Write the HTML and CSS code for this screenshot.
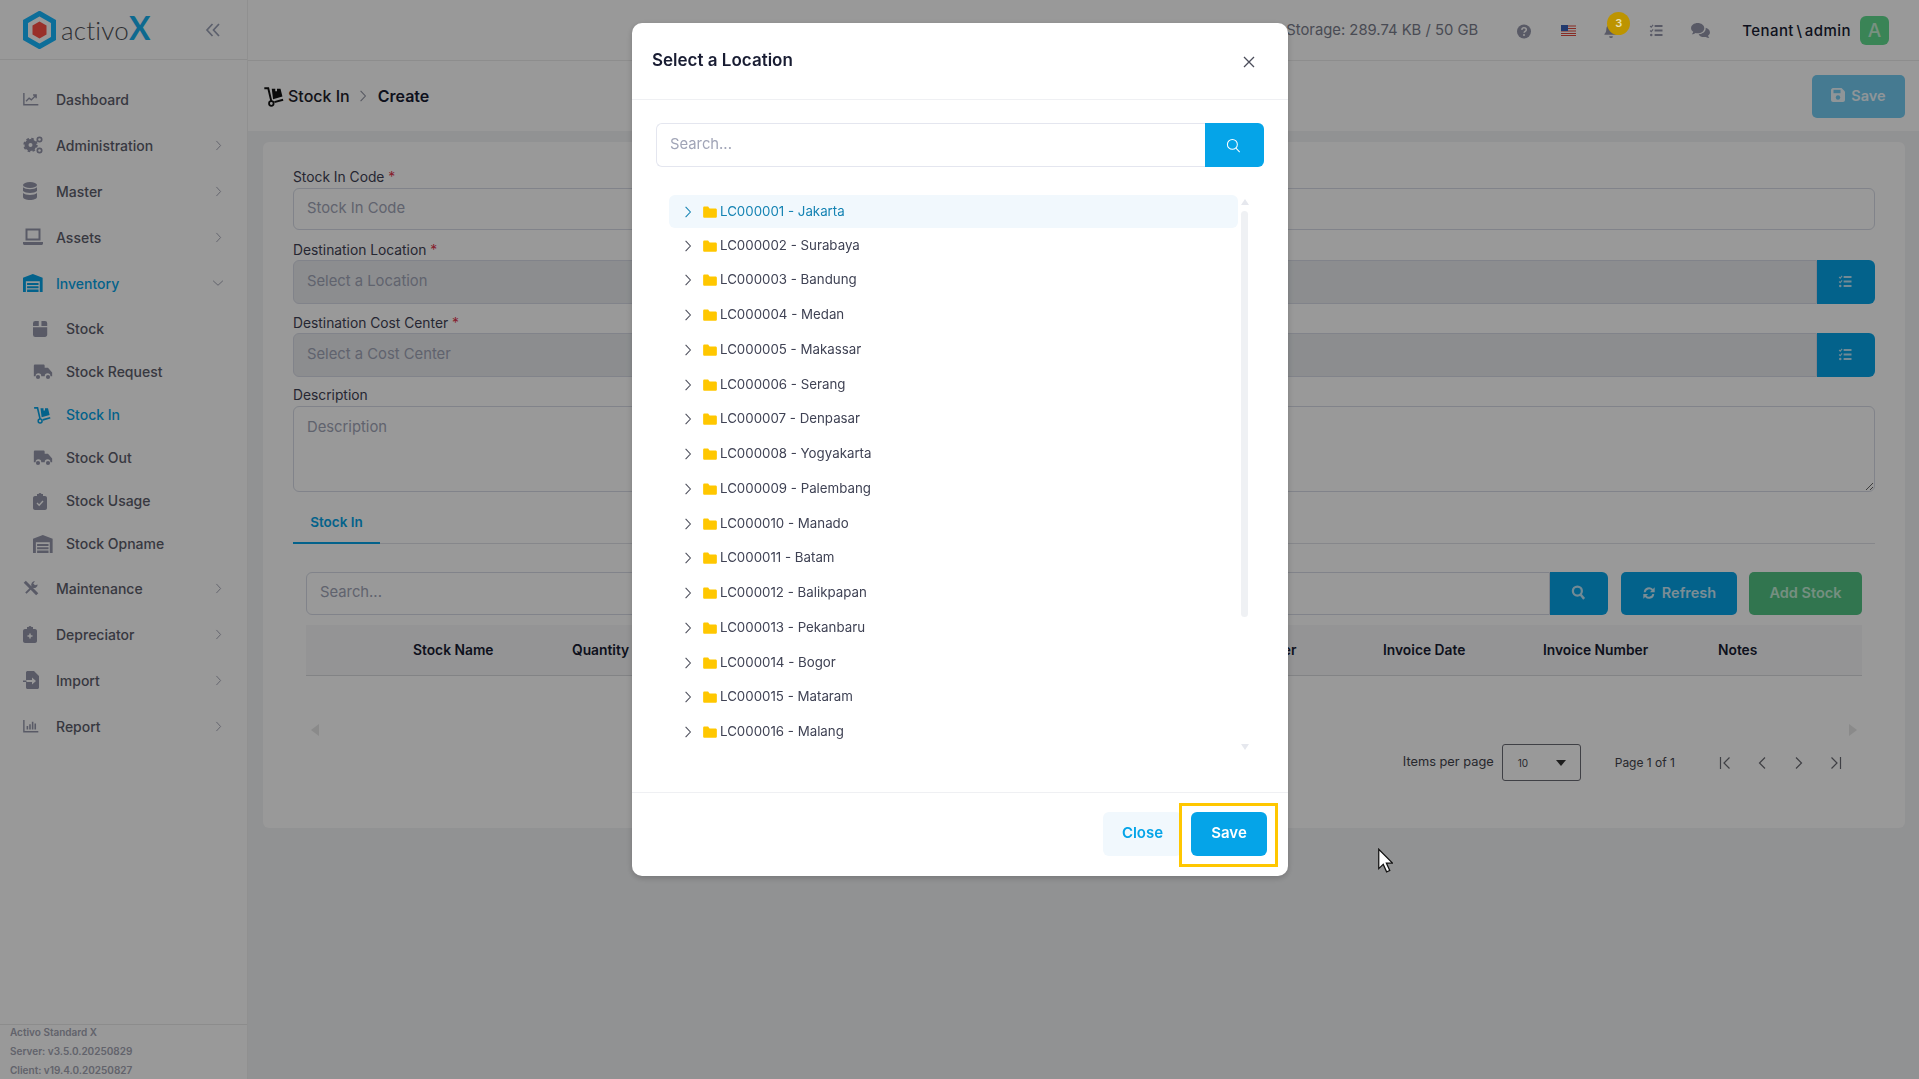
FILE: index.html
```html
<!DOCTYPE html>
<html lang="en">
<head>
<meta charset="utf-8">
<title>activoX - Stock In</title>
<link rel="stylesheet" href="styles.css">
</head>
<body>
<svg class="defs" width="0" height="0" aria-hidden="true">
  <defs>
    <symbol id="i-chev-r" viewBox="0 0 10 16"><path d="M2 1.500 8 8l-6 6.500" fill="none" stroke="currentColor" stroke-width="1.300"/></symbol>
    <symbol id="i-chev-d" viewBox="0 0 16 10"><path d="M1.500 2 8 8l6.500-6" fill="none" stroke="currentColor" stroke-width="1.300"/></symbol>
    <symbol id="i-cart" viewBox="0 0 24 24" preserveAspectRatio="xMinYMid meet"><path d="M1.500 2.500H6l3.500 15" fill="none" stroke="currentColor" stroke-width="2.200"/><circle cx="9.500" cy="20" r="2.600" fill="none" stroke="currentColor" stroke-width="2"/><path d="M13 18.500l10-2.800" stroke="currentColor" stroke-width="2.200"/><path d="M10 3h4v3h2V3h4l2.200 9L11.500 15z" fill="currentColor"/></symbol>
    <symbol id="i-list" viewBox="0 0 20 20"><path d="M7.500 4H18M7.500 10H18M7.500 16H18" stroke="currentColor" stroke-width="2.400"/><path d="M1.500 4l1.500 1.500L5.500 2.500M1.500 10l1.500 1.500 2.500-3" fill="none" stroke="currentColor" stroke-width="1.500"/><circle cx="3" cy="16" r="1.700" fill="currentColor"/></symbol>
    <symbol id="i-folder" viewBox="0 0 16 14"><path d="M0 2.200C0 1.300.7.700 1.500.700h4.300L7.500 3H14.500c.8 0 1.500.7 1.500 1.500v7.800c0 .8-.7 1.500-1.500 1.500h-13C.7 13.800 0 13.100 0 12.300z" fill="currentColor"/></symbol>
    <symbol id="i-search" viewBox="0 0 16 16"><circle cx="6.800" cy="6.800" r="5.300" fill="none" stroke="currentColor" stroke-width="1.100"/><path d="M10.600 10.800 14.600 15" stroke="currentColor" stroke-width="1.100"/></symbol>
    <symbol id="i-search-b" viewBox="0 0 16 16"><circle cx="6.800" cy="6.500" r="4.800" fill="none" stroke="currentColor" stroke-width="2.400"/><path d="M10.200 10.200 14 14.800" stroke="currentColor" stroke-width="2.600"/></symbol>
    <symbol id="i-truck" viewBox="0 0 24 20" preserveAspectRatio="xMinYMid meet"><path d="M1 2.500C1 1.700 1.700 1 2.500 1h10c.8 0 1.500.7 1.500 1.500V5h4l5 5.500V15h-2.100a3.400 3.400 0 0 0-6.800 0h-4.200a3.400 3.400 0 0 0-6.800 0H1z" fill="currentColor"/><circle cx="6" cy="16" r="2.500" fill="currentColor"/><circle cx="18" cy="16" r="2.500" fill="currentColor"/></symbol>
    <symbol id="i-warehouse" viewBox="0 0 24 22" preserveAspectRatio="xMinYMid meet"><path d="M12 0 24 4.500V22h-3.500V9h-17v13H0V4.500z" fill="currentColor"/><path d="M5 11h14v2.500H5zM5 15h14v2.500H5zM5 19h14v3H5z" fill="currentColor"/></symbol>
  </defs>
</svg>

<aside class="sidebar">
  <div class="brand">
    <svg class="brand-mark" viewBox="0 0 34 38" aria-hidden="true"><path d="M17 2.500 31 10.500v17L17 35.500 3 27.500v-17z" fill="none" stroke="#16b8ff" stroke-width="5"/><path d="M17 10.500 24 14.500v9l-7 4-7-4v-9z" fill="#ff5046"/></svg>
    <span class="brand-name">activo<b>X</b></span>
    <svg class="collapse" viewBox="0 0 16 16" aria-hidden="true"><path d="M7.500 2 2 8l5.500 6M14 2 8.500 8l5.500 6" fill="none" stroke="currentColor" stroke-width="1.700"/></svg>
  </div>
  <nav class="nav">
    <a class="nav-item"><svg class="nav-icon icon-sm" viewBox="0 0 18 16" preserveAspectRatio="xMinYMid meet"><path d="M1 1v13.500h16.500" fill="none" stroke="currentColor" stroke-width="1.600"/><path d="M3.500 10.500 7 7l2.500 2 5-5M11.500 3.500h3.500V7" fill="none" stroke="currentColor" stroke-width="1.600"/></svg><span>Dashboard</span></a>
    <a class="nav-item"><svg class="nav-icon" viewBox="0 0 20 18" preserveAspectRatio="xMinYMid meet"><circle cx="7.500" cy="9" r="4" fill="none" stroke="currentColor" stroke-width="4"/><circle cx="7.500" cy="9" r="6.300" fill="none" stroke="currentColor" stroke-width="1.800" stroke-dasharray="2.600 2.350"/><circle cx="16.500" cy="3.500" r="2.200" fill="none" stroke="currentColor" stroke-width="1.700"/><circle cx="16.500" cy="14.500" r="2.200" fill="none" stroke="currentColor" stroke-width="1.700"/></svg><span>Administration</span><svg class="nav-chev"><use href="#i-chev-r"/></svg></a>
    <a class="nav-item"><svg class="nav-icon" viewBox="0 0 20 18" preserveAspectRatio="xMinYMid meet"><g fill="currentColor"><ellipse cx="7" cy="3" rx="7" ry="3"/><path d="M0 5.200c2.500 2.600 11.500 2.600 14 0V9c-2.500 2.600-11.500 2.600-14 0zM0 11c2.500 2.600 11.500 2.600 14 0v4c0 1.600-3 3-7 3s-7-1.400-7-3z"/></g></svg><span>Master</span><svg class="nav-chev"><use href="#i-chev-r"/></svg></a>
    <a class="nav-item"><svg class="nav-icon" viewBox="0 0 20 18" preserveAspectRatio="xMinYMid meet"><path d="M3.500 1.500h13v10h-13z" fill="none" stroke="currentColor" stroke-width="2"/><path d="M0 14h20v1.500c0 .8-.7 1.500-1.500 1.500h-17C.7 17 0 16.300 0 15.500z" fill="currentColor"/></svg><span>Assets</span><svg class="nav-chev"><use href="#i-chev-r"/></svg></a>
    <a class="nav-item nav-active nav-open"><svg class="nav-icon"><use href="#i-warehouse"/></svg><span>Inventory</span><svg class="nav-chev-d"><use href="#i-chev-d"/></svg></a>
    <a class="nav-sub"><svg class="nav-icon icon-box" viewBox="0 0 16 18" preserveAspectRatio="xMinYMid meet"><path d="M2.500 0h4v5.500H0V2.500A2.500 2.500 0 0 1 2.500 0zM9.500 0h4A2.500 2.500 0 0 1 16 2.500v3H9.500zM0 7h16v8.500c0 1.400-1.100 2.500-2.500 2.500h-11A2.500 2.500 0 0 1 0 15.500z" fill="currentColor"/></svg><span>Stock</span></a>
    <a class="nav-sub"><svg class="nav-icon"><use href="#i-truck"/></svg><span>Stock Request</span></a>
    <a class="nav-sub nav-active"><svg class="nav-icon"><use href="#i-cart"/></svg><span>Stock In</span></a>
    <a class="nav-sub"><svg class="nav-icon"><use href="#i-truck"/></svg><span>Stock Out</span></a>
    <a class="nav-sub"><svg class="nav-icon" viewBox="0 0 14 18" preserveAspectRatio="xMinYMid meet"><path d="M4 2h1.500a1.600 1.600 0 0 1 3 0H10v2H12c1 0 2 .9 2 2v10c0 1.100-1 2-2 2H2c-1 0-2-.9-2-2V6c0-1.100 1-2 2-2h2z" fill="currentColor"/><path d="M4 11l2.200 2.200L10 9" fill="none" stroke="#fff" stroke-width="1.400"/></svg><span>Stock Usage</span></a>
    <a class="nav-sub"><svg class="nav-icon"><use href="#i-warehouse"/></svg><span>Stock Opname</span></a>
    <a class="nav-item"><svg class="nav-icon icon-md" viewBox="0 0 18 18" preserveAspectRatio="xMinYMid meet"><path d="M2 2 16 16" stroke="currentColor" stroke-width="3.400"/><path d="M16.500 5a4 4 0 0 1-5.600 3.600L4 15.500 2.500 14l7-7A4 4 0 0 1 13.500 1.500L11.500 4l2 2z" fill="currentColor"/></svg><span>Maintenance</span><svg class="nav-chev"><use href="#i-chev-r"/></svg></a>
    <a class="nav-item"><svg class="nav-icon" viewBox="0 0 14 18" preserveAspectRatio="xMinYMid meet"><path d="M4 2h1.500a1.600 1.600 0 0 1 3 0H10v2H12c1 0 2 .9 2 2v10c0 1.100-1 2-2 2H2c-1 0-2-.9-2-2V6c0-1.100 1-2 2-2h2z" fill="currentColor"/><path d="M7 8.500v5M4.500 11h5" stroke="#fff" stroke-width="1.500"/></svg><span>Depreciator</span><svg class="nav-chev"><use href="#i-chev-r"/></svg></a>
    <a class="nav-item"><svg class="nav-icon" viewBox="0 0 18 18" preserveAspectRatio="xMinYMid meet"><path d="M4 0h7l5 5v11.500c0 .8-.7 1.500-1.500 1.500h-10c-.8 0-1.500-.7-1.500-1.500V11h6v2.500L13 10 9 6.500V9H3V1z" fill="currentColor"/><path d="M0 9.500h3.500v1.500H0z" fill="currentColor"/></svg><span>Import</span><svg class="nav-chev"><use href="#i-chev-r"/></svg></a>
    <a class="nav-item"><svg class="nav-icon icon-sm" viewBox="0 0 18 16" preserveAspectRatio="xMinYMid meet"><path d="M1 1v13.500h16.500" fill="none" stroke="currentColor" stroke-width="1.600"/><path d="M5 8v4M8 6v6M11 3v9M14 5v7" stroke="currentColor" stroke-width="1.800"/></svg><span>Report</span><svg class="nav-chev"><use href="#i-chev-r"/></svg></a>
  </nav>
  <footer class="version">
    <div>Activo Standard X</div>
    <div>Server: v3.5.0.20250829</div>
    <div>Client: v19.4.0.20250827</div>
  </footer>
</aside>

<div class="main">
  <header class="topbar">
    <span class="storage">Storage: 289.74 KB / 50 GB</span>
    <svg class="top-icon top-help" viewBox="0 0 14 14"><circle cx="7" cy="7" r="7" fill="currentColor"/><path d="M4.800 5.300C5 3.800 6 3.300 7 3.300c1.300 0 2.300.8 2.300 1.900 0 1.700-2.200 1.600-2.200 3.100" fill="none" stroke="#fff" stroke-width="1.500"/><circle cx="7" cy="10.600" r="1" fill="#fff"/></svg>
    <svg class="flag" viewBox="0 0 15 11"><rect width="15" height="11" fill="#fff"/><path d="M0 1h15M0 3.500h15M0 6h15M0 8.500h15M0 10.500h15" stroke="#e2483d" stroke-width="1.200"/><rect width="7" height="6" fill="#3a62b8"/></svg>
    <span class="bell-wrap">
      <svg class="top-icon" viewBox="0 0 14 16"><path d="M7 0c.6 0 1 .5 1 1v.6c2.500.5 4 2.500 4 5 0 3 1 4 2 5v1H0v-1c1-1 2-2 2-5 0-2.500 1.500-4.500 4-5V1c0-.5.4-1 1-1zM5 14h4a2 2 0 0 1-4 0z" fill="currentColor"/></svg>
      <b class="badge">3</b>
    </span>
    <svg class="top-icon top-tasks"><use href="#i-list"/></svg>
    <svg class="top-icon top-chat" viewBox="0 0 20 18"><path d="M7 1c3.800 0 7 2.300 7 5.500S10.800 12 7 12c-.8 0-1.500-.1-2.200-.3C3.700 12.600 2.300 13 .8 13c.9-1 1.400-1.800 1.500-2.800C.9 9.300 0 8 0 6.500 0 3.300 3.200 1 7 1z" fill="currentColor"/><path d="M15.500 6.200C18 7 20 8.700 20 11c0 1.400-.8 2.600-2 3.400.1 1 .6 1.800 1.400 2.600-1.500 0-2.700-.4-3.800-1.200-3.200.7-6.600-.5-7.600-2.900 4.300 0 7.800-2.500 7.500-6.700z" fill="currentColor"/></svg>
    <span class="user">Tenant \ admin</span>
    <span class="avatar">A</span>
  </header>

  <section class="titlebar">
    <svg class="crumb-icon"><use href="#i-cart"/></svg>
    <span class="crumb">Stock In</span>
    <svg class="crumb-sep"><use href="#i-chev-r"/></svg>
    <span class="crumb-now">Create</span>
    <button class="btn btn-save-top"><svg viewBox="0 0 14 14"><path d="M0 2C0 1 1 0 2 0h8.500L14 3.500V12c0 1-1 2-2 2H2c-1 0-2-1-2-2z" fill="currentColor"/><rect x="2.500" y="1.800" width="7" height="3.400" fill="#73cbf2"/><circle cx="7" cy="9.500" r="2.200" fill="#73cbf2"/></svg>Save</button>
  </section>

  <section class="content">
    <div class="card">
      <div class="field field-first">
        <label>Stock In Code <i>*</i></label>
        <input class="ctl ctl-code" placeholder="Stock In Code">
      </div>
      <div class="field">
        <label>Destination Location <i>*</i></label>
        <div class="input-group">
          <input class="ctl ctl-locked" placeholder="Select a Location" readonly>
          <button class="group-btn"><svg><use href="#i-list"/></svg></button>
        </div>
      </div>
      <div class="field field-tight">
        <label>Destination Cost Center <i>*</i></label>
        <div class="input-group">
          <input class="ctl ctl-locked" placeholder="Select a Cost Center" readonly>
          <button class="group-btn"><svg><use href="#i-list"/></svg></button>
        </div>
      </div>
      <div class="field">
        <label>Description</label>
        <textarea class="ctl ctl-area" placeholder="Description"></textarea>
      </div>

      <div class="tabs"><span class="tab">Stock In</span></div>

      <div class="panel">
        <div class="toolbar">
          <div class="input-group search-group">
            <input class="ctl ctl-search" placeholder="Search...">
            <button class="group-btn search-btn"><svg><use href="#i-search-b"/></svg></button>
          </div>
          <button class="btn btn-blue"><svg viewBox="0 0 16 16"><path d="M2 7a6 6 0 0 1 10.500-3.500L14.500 1.500V7H9l2-2a4 4 0 0 0-6.800 2zM14 9a6 6 0 0 1-10.500 3.500L1.500 14.500V9H7l-2 2a4 4 0 0 0 6.800-2z" fill="currentColor"/></svg>Refresh</button>
          <button class="btn btn-green">Add Stock</button>
        </div>
        <div class="thead">
          <span></span><span>Stock Name</span><span>Quantity</span><span>Supplier</span><span>Invoice Date</span><span>Invoice Number</span><span>Notes</span>
        </div>
        <div class="hscroll"><i class="arrow-l"></i><i class="arrow-r"></i></div>
        <div class="pager">
          <span class="pager-label">Items per page</span>
          <span class="pager-select">10<i></i></span>
          <span class="pager-range">Page 1 of 1</span>
          <span class="pager-nav">
            <svg viewBox="0 0 12 14"><path d="M1.500 1v12M10.500 1.500 5 7l5.500 5.500" fill="none" stroke="currentColor" stroke-width="1.200"/></svg>
            <svg viewBox="0 0 12 14"><path d="M9 1.500 3.500 7 9 12.500" fill="none" stroke="currentColor" stroke-width="1.200"/></svg>
            <svg viewBox="0 0 12 14"><path d="M3 1.500 8.500 7 3 12.500" fill="none" stroke="currentColor" stroke-width="1.200"/></svg>
            <svg viewBox="0 0 12 14"><path d="M10.500 1v12M1.500 1.500 7 7l-5.500 5.500" fill="none" stroke="currentColor" stroke-width="1.200"/></svg>
          </span>
        </div>
      </div>
    </div>
  </section>
</div>

<div class="backdrop"></div>

<div class="modal">
  <div class="modal-head">
    <h2>Select a Location</h2>
    <svg class="modal-close" viewBox="0 0 12 12"><path d="M1 1l10 10M11 1 1 11" stroke="currentColor" stroke-width="1.300"/></svg>
  </div>
  <div class="modal-body">
    <div class="modal-search">
      <input placeholder="Search...">
      <button><svg><use href="#i-search"/></svg></button>
    </div>
    <div class="tree-wrap">
      <ul class="tree">
        <li class="tree-row tree-active"><svg class="tree-chev"><use href="#i-chev-r"/></svg><svg class="tree-folder"><use href="#i-folder"/></svg><span>LC000001 - Jakarta</span></li>
        <li class="tree-row"><svg class="tree-chev"><use href="#i-chev-r"/></svg><svg class="tree-folder"><use href="#i-folder"/></svg><span>LC000002 - Surabaya</span></li>
        <li class="tree-row"><svg class="tree-chev"><use href="#i-chev-r"/></svg><svg class="tree-folder"><use href="#i-folder"/></svg><span>LC000003 - Bandung</span></li>
        <li class="tree-row"><svg class="tree-chev"><use href="#i-chev-r"/></svg><svg class="tree-folder"><use href="#i-folder"/></svg><span>LC000004 - Medan</span></li>
        <li class="tree-row"><svg class="tree-chev"><use href="#i-chev-r"/></svg><svg class="tree-folder"><use href="#i-folder"/></svg><span>LC000005 - Makassar</span></li>
        <li class="tree-row"><svg class="tree-chev"><use href="#i-chev-r"/></svg><svg class="tree-folder"><use href="#i-folder"/></svg><span>LC000006 - Serang</span></li>
        <li class="tree-row"><svg class="tree-chev"><use href="#i-chev-r"/></svg><svg class="tree-folder"><use href="#i-folder"/></svg><span>LC000007 - Denpasar</span></li>
        <li class="tree-row"><svg class="tree-chev"><use href="#i-chev-r"/></svg><svg class="tree-folder"><use href="#i-folder"/></svg><span>LC000008 - Yogyakarta</span></li>
        <li class="tree-row"><svg class="tree-chev"><use href="#i-chev-r"/></svg><svg class="tree-folder"><use href="#i-folder"/></svg><span>LC000009 - Palembang</span></li>
        <li class="tree-row"><svg class="tree-chev"><use href="#i-chev-r"/></svg><svg class="tree-folder"><use href="#i-folder"/></svg><span>LC000010 - Manado</span></li>
        <li class="tree-row"><svg class="tree-chev"><use href="#i-chev-r"/></svg><svg class="tree-folder"><use href="#i-folder"/></svg><span>LC000011 - Batam</span></li>
        <li class="tree-row"><svg class="tree-chev"><use href="#i-chev-r"/></svg><svg class="tree-folder"><use href="#i-folder"/></svg><span>LC000012 - Balikpapan</span></li>
        <li class="tree-row"><svg class="tree-chev"><use href="#i-chev-r"/></svg><svg class="tree-folder"><use href="#i-folder"/></svg><span>LC000013 - Pekanbaru</span></li>
        <li class="tree-row"><svg class="tree-chev"><use href="#i-chev-r"/></svg><svg class="tree-folder"><use href="#i-folder"/></svg><span>LC000014 - Bogor</span></li>
        <li class="tree-row"><svg class="tree-chev"><use href="#i-chev-r"/></svg><svg class="tree-folder"><use href="#i-folder"/></svg><span>LC000015 - Mataram</span></li>
        <li class="tree-row"><svg class="tree-chev"><use href="#i-chev-r"/></svg><svg class="tree-folder"><use href="#i-folder"/></svg><span>LC000016 - Malang</span></li>
      </ul>
      <div class="vscroll"><i class="sb-up"></i><i class="sb-thumb"></i><i class="sb-down"></i></div>
    </div>
  </div>
  <div class="modal-foot">
    <button class="mbtn mbtn-close">Close</button>
    <button class="mbtn mbtn-save">Save</button>
  </div>
</div>

<span class="callout"></span>
<svg class="pointer" viewBox="0 0 12 20" aria-hidden="true"><path d="M1 1v15.500l3.600-3.400 2.700 6 2.500-1.100-2.700-5.900h4.900z" fill="#fff" stroke="#111" stroke-width="1"/></svg>
</body>
</html>
```

FILE: styles.css
```css
* { box-sizing: border-box; }
html, body { height: 100%; }
body {
  margin: 0;
  display: flex;
  overflow: hidden;
  background: #f2f3f5;
  color: #4b4d5a;
  font-family: Inter, "Liberation Sans", sans-serif;
  font-size: 14px;
}
.defs { position: absolute; }
ul { list-style: none; margin: 0; padding: 0; }
button { font: inherit; border: 0; cursor: pointer; }
input, textarea { font: inherit; outline: 0; }
input::placeholder, textarea::placeholder { color: #a1a5b7; opacity: 1; }

/* sidebar */
.sidebar {
  width: 248px;
  flex: none;
  height: 100vh;
  display: flex;
  flex-direction: column;
  background: #fff;
  border-right: 1px solid #f1f1f1;
}
.brand {
  height: 60px;
  flex: none;
  display: flex;
  align-items: center;
  padding-left: 22px;
  border-bottom: 1px solid #ececec;
}
.brand-mark { width: 35px; height: 38px; margin-right: 4px; }
.brand-name { font-size: 26px; font-weight: 300; color: #4e4f55; letter-spacing: .2px; font-family: Lato, sans-serif; margin-bottom: 2px; }
.brand-name b { color: #16b0ee; font-weight: 700; font-size: 32px; line-height: 1; }
.collapse { width: 16px; height: 16px; margin-left: 54px; color: #9aa0b5; }
.nav { padding-top: 16px; display: flex; flex-direction: column; }
.nav-item, .nav-sub {
  display: flex;
  align-items: center;
  color: #5d5e6c;
  font-weight: 500;
}
.nav-item { height: 46px; padding-left: 23px; }
.nav-open { margin-bottom: 1px; }
.nav-sub { height: 43px; padding-left: 33px; }
.nav-icon { width: 20px; height: 18px; flex: none; margin-right: 13px; color: #9597ab; }
.icon-sm { height: 14px; }
.icon-md { height: 16px; }
.icon-box { height: 16px; }
.nav-active, .nav-active .nav-icon { color: #05a4e8; }
.nav-chev { width: 7px; height: 13px; margin-left: auto; margin-right: 25px; color: #a0a2b2; }
.nav-chev-d { width: 12px; height: 8px; margin-left: auto; margin-right: 23px; color: #a0a2b2; }
.version {
  margin-top: auto;
  height: 55px;
  padding: 0 0 0 10px;
  border-top: 1px solid #e9e9e9;
  color: #a3a5b3;
  font-size: 10px;
  font-weight: 600;
  line-height: 19px;
}
.version div:first-child { margin-top: -2px; }

/* main */
.main { flex: 1; min-width: 0; display: flex; flex-direction: column; }
.topbar {
  height: 61px;
  flex: none;
  display: flex;
  align-items: center;
  justify-content: flex-end;
  padding-right: 30px;
  background: #fff;
  border-bottom: 1px solid #ececec;
}
.storage { font-size: 14.800px; color: #7a7d8c; margin-right: 39px; }
.top-icon { width: 14px; height: 15px; color: #9597ab; flex: none; }
.top-help { margin-top: 3px; }
.flag { width: 15px; height: 11px; margin: 0 28px 0 30px; }
.bell-wrap { position: relative; display: flex; margin-right: 31px; }
.badge {
  position: absolute;
  z-index: 1060;
  left: 3px;
  top: -11px;
  width: 23px;
  height: 23px;
  border-radius: 50%;
  background: #bd9400;
  color: #e8e0b4;
  font-size: 11px;
  font-weight: 600;
  text-align: center;
  line-height: 22px;
}
.top-tasks { width: 15px; height: 15px; margin-right: 27px; }
.top-chat { width: 19px; height: 17px; margin-right: 32px; }
.user { font-size: 15px; font-weight: 500; color: #181c32; word-spacing: -2px; letter-spacing: .45px; }
.avatar {
  width: 29px;
  height: 29px;
  margin-left: 9px;
  border-radius: 6px;
  background: #62dc90;
  color: #c9f2d8;
  font-size: 19px;
  text-align: center;
  line-height: 29px;
  font-weight: 500;
}
.titlebar {
  height: 70px;
  flex: none;
  display: flex;
  align-items: center;
  padding: 0 14px 0 15px;
  background: #fff;
}
.crumb-icon { width: 21px; height: 21px; color: #111; margin-right: 4px; }
.crumb { font-size: 16px; font-weight: 500; color: #1e2129; }
.crumb-sep { width: 8px; height: 14px; color: #8f92a1; margin: 0 11px 0 9px; }
.crumb-now { font-size: 16px; font-weight: 600; color: #181c32; }
.btn {
  display: inline-flex;
  align-items: center;
  justify-content: center;
  gap: 6px;
  height: 43px;
  padding: 0 0 2px;
  border-radius: 5px;
  font-weight: 600;
  font-size: 14.500px;
}
.btn svg { width: 14px; height: 14px; }
.btn-save-top {
  margin-left: auto;
  width: 93px;
  background: #73cbf2;
  color: #eef9fe;
}
.content { flex: 1; padding: 11px 14px 0 15px; }
.card {
  height: 686px;
  background: #fff;
  border-radius: 6px;
  padding: 25px 30px 0;
}
.field { margin-bottom: 9px; }
.field-first { margin-bottom: 10px; }
.field-tight { margin-bottom: 8px; }
.field label { display: block; height: 20px; line-height: 20px; color: #3f4254; font-size: 13.800px; }
.field label i { color: #e2344d; font-style: normal; }
.ctl {
  display: block;
  width: 100%;
  height: 44px;
  padding: 0 13px 2px;
  border: 1px solid #d8dbe6;
  border-radius: 6px;
  background: #fff;
  color: #3f4254;
  font-size: 14.800px;
}
.ctl-code { height: 42px; margin-top: 1px; }
.ctl-locked { background: #e9ecef; border-radius: 6px 0 0 6px; }
.ctl-area { height: 86px; margin-top: 1px; padding-top: 11px; resize: vertical; }
.input-group { display: flex; }
.group-btn {
  flex: none;
  width: 58px;
  padding: 0 2px 2px 0;
  background: #05a4e8;
  color: #bfe6f8;
  border-radius: 0 6px 6px 0;
  display: flex;
  align-items: center;
  justify-content: center;
}
.group-btn svg { width: 15px; height: 15px; }
.tabs { margin-top: 10px; height: 42px; border-bottom: 1px solid #dfe1e8; }
.tab {
  display: block;
  width: 87px;
  height: 42px;
  text-align: center;
  line-height: 40px;
  color: #05a4e8;
  font-weight: 600;
  font-size: 13.500px;
  border-bottom: 2px solid #05a4e8;
}
.panel { padding: 28px 13px 0; }
.toolbar { display: flex; gap: 13px; }
.search-group { flex: 1; }
.ctl-search { height: 43px; padding-bottom: 3px; border-radius: 6px 0 0 6px; }
.search-btn { height: 43px; }
.btn-blue { width: 116px; background: #05a4e8; color: #cdebf9; margin-right: -1px; }
.btn-green { width: 113px; background: #53c484; color: #c4efd7; }
.thead {
  margin-top: 10px;
  height: 51px;
  display: grid;
  grid-template-columns: 107px 159px 669px 142px 160px 175px 1fr;
  align-items: center;
  padding-bottom: 1px;
  background: #f7f7f8;
  border-bottom: 1px solid #d9dade;
  color: #181c32;
  font-weight: 600;
  font-size: 13.800px;
}
.hscroll { display: flex; justify-content: space-between; align-items: flex-start; padding: 48px 5px 0; height: 58px; }
.arrow-l { border: 6px solid transparent; border-right: 8px solid #e6e6e6; border-left: 0; }
.arrow-r { border: 6px solid transparent; border-left: 8px solid #e6e6e6; border-right: 0; }
.pager {
  margin-top: 10px;
  display: flex;
  align-items: center;
  justify-content: flex-end;
  padding-right: 20px;
  color: #42434c;
  font-size: 12px;
}
.pager-label { margin-bottom: 2px; font-size: 12.800px; }
.pager-select {
  width: 79px;
  height: 37px;
  margin: 0 34px 0 8px;
  padding-left: 15px;
  border: 1px solid #6a6b73;
  border-radius: 3px;
  display: flex;
  align-items: center;
  justify-content: space-between;
  font-size: 10px;
}
.pager-select i {
  margin-right: 14px;
  border: 5px solid transparent;
  border-top: 6px solid #333;
  border-bottom: 0;
}
.pager-range { margin-right: 44px; }
.pager-nav { display: flex; gap: 25px; color: #6a6b73; }
.pager-nav svg { width: 12px; height: 14px; }

/* modal */
.backdrop { position: fixed; inset: 0; z-index: 1040; background: rgba(0, 0, 0, .4); }
.modal {
  position: fixed;
  z-index: 1050;
  left: 632px;
  top: 23px;
  width: 656px;
  height: 853px;
  display: flex;
  flex-direction: column;
  background: #fff;
  border-radius: 10px;
  box-shadow: 0 2px 6px rgba(0, 0, 0, .2);
}
.modal-head {
  height: 77px;
  flex: none;
  display: flex;
  align-items: center;
  justify-content: space-between;
  padding: 0 33px 0 20px;
  border-bottom: 1px solid #eff0f3;
}
.modal-head h2 { margin: 0 0 2px; font-size: 17px; font-weight: 600; color: #181c32; }
.modal-close { width: 12px; height: 12px; color: #4b4d5a; margin-top: 2px; }
.modal-body { flex: 1; min-height: 0; padding: 23px 24px 0; }
.modal-search { display: flex; height: 44px; }
.modal-search input {
  flex: 1;
  border: 1px solid #e4e6ef;
  border-right: 0;
  border-radius: 6px 0 0 6px;
  padding: 0 13px 3px;
  font-size: 14.800px;
  margin-right: -1px;
}
.modal-search button {
  width: 59px;
  padding: 0 3px 0 0;
  background: #05a4e8;
  color: #fff;
  border-radius: 0 6px 6px 0;
  display: flex;
  align-items: center;
  justify-content: center;
}
.modal-search svg { width: 15px; height: 17px; }
.tree-wrap { display: flex; margin-top: 26.500px; padding-left: 13px; }
.tree { width: 569px; flex: none; }
.tree-row {
  height: 34.750px;
  display: flex;
  align-items: center;
  padding-left: 15px;
  color: #3f4254;
  font-size: 13.300px;
  border-radius: 6px;
}
.tree-row span { margin-bottom: 2px; }
.tree-active { background: #f1f8fd; color: #1583b3; height: 33px; margin: 1.500px 0 .3px; }
.tree-chev { width: 8px; height: 14px; flex: none; color: #4b4d5a; margin-right: 11px; }
.tree-active .tree-chev { color: #1583b3; }
.tree-folder { width: 14px; height: 12px; flex: none; color: #ffc700; margin-right: 3px; }
.vscroll { width: 7px; margin-left: 3px; padding-top: 1.500px; display: flex; flex-direction: column; align-items: center; }
.sb-up { border: 4px solid transparent; border-bottom: 6px solid #e6e8ee; border-top: 0; margin-top: 4px; margin-bottom: 6px; }
.sb-thumb { width: 7px; height: 406px; background: #eff1f4; border-radius: 4px; }
.sb-down { margin-top: 127px; border: 4px solid transparent; border-top: 6px solid #e6e8ee; border-bottom: 0; }
.modal-foot {
  height: 84px;
  flex: none;
  display: flex;
  align-items: flex-start;
  justify-content: flex-end;
  gap: 9px;
  padding: 19px 21px 0 0;
  border-top: 1px solid #eff0f3;
}
.mbtn { height: 44px; border-radius: 6px; font-weight: 600; font-size: 15px; padding: 0 0 3px; }
.mbtn-close { width: 79px; background: #f1f8fd; color: #05a4e8; }
.mbtn-save { width: 76px; background: #05a4e8; color: #fff; }

/* annotation drawn over the screenshot */
.callout {
  position: fixed;
  z-index: 1060;
  left: 1179px;
  top: 803px;
  width: 99px;
  height: 64px;
  border: 3px solid #ffc700;
}
.pointer {
  position: fixed;
  z-index: 1060;
  left: 1377px;
  top: 848px;
  width: 16px;
  height: 25px;
}
```
